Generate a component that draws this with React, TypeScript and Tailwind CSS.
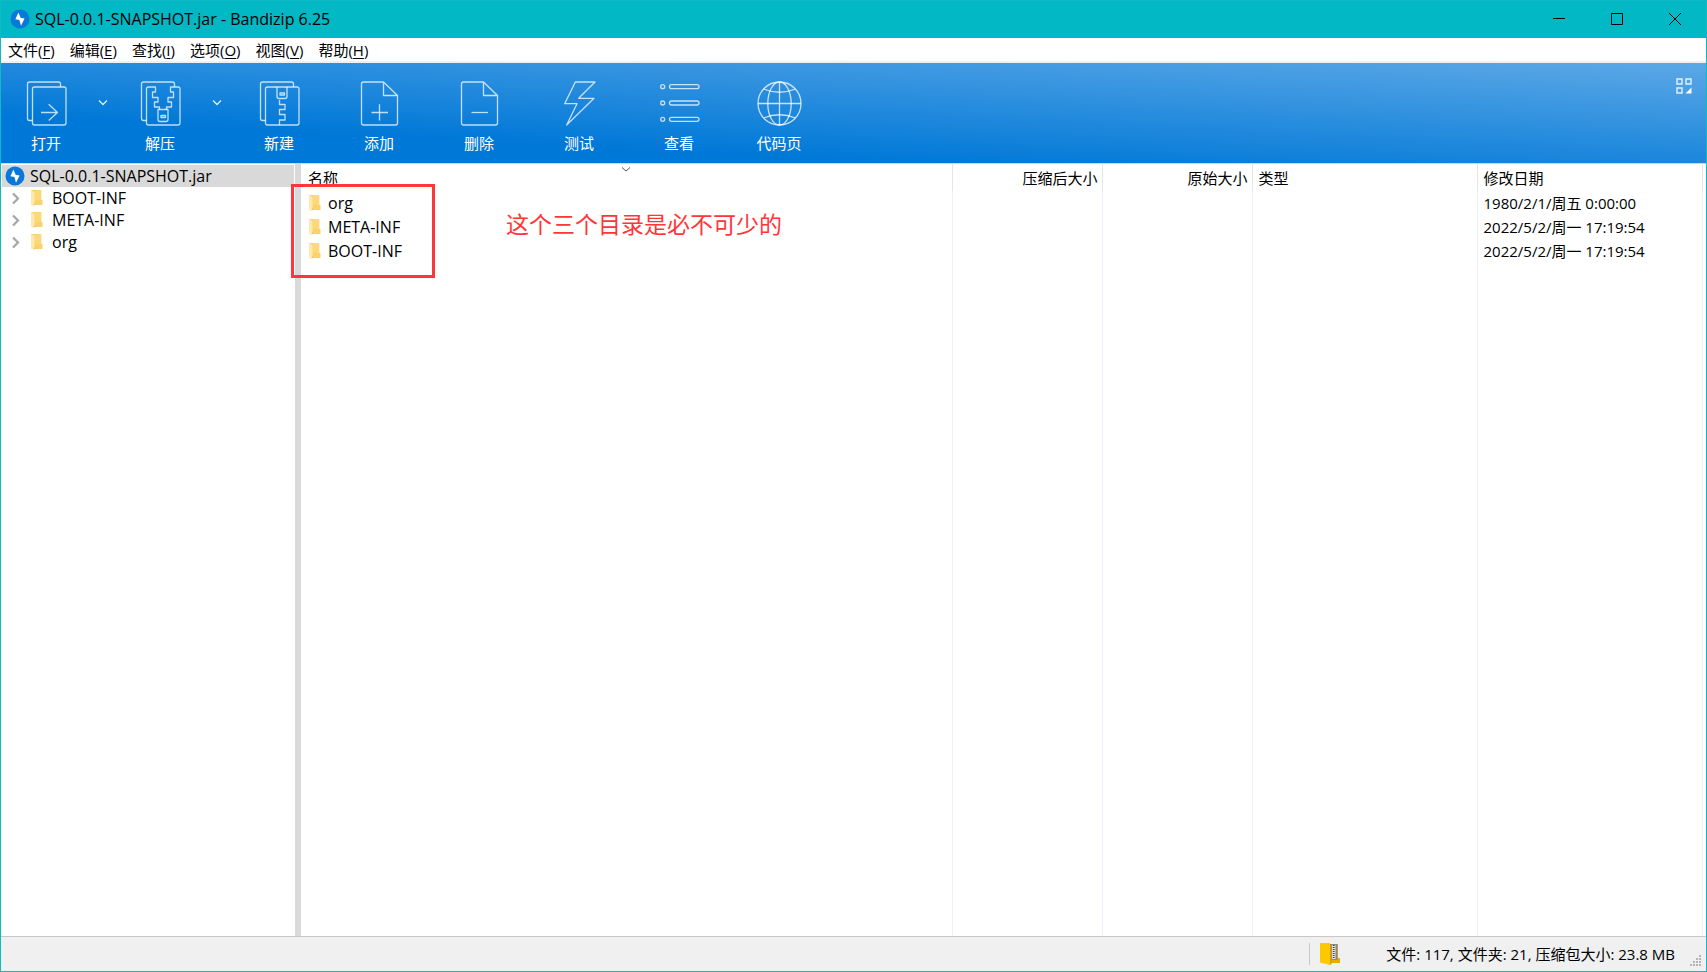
import React, { useState } from 'react';

interface MenuItem {
  label: string;
  hotkey: string;
}

interface ArchiveEntry {
  name: string;
  modified: string;
}

const menuItems: MenuItem[] = [
  { label: '文件', hotkey: 'F' },
  { label: '编辑', hotkey: 'E' },
  { label: '查找', hotkey: 'I' },
  { label: '选项', hotkey: 'O' },
  { label: '视图', hotkey: 'V' },
  { label: '帮助', hotkey: 'H' },
];

const treeFolders = ['BOOT-INF', 'META-INF', 'org'];

const entries: ArchiveEntry[] = [
  { name: 'org', modified: '1980/2/1/周五 0:00:00' },
  { name: 'META-INF', modified: '2022/5/2/周一 17:19:54' },
  { name: 'BOOT-INF', modified: '2022/5/2/周一 17:19:54' },
];

const AppLogo: React.FC<{ className?: string }> = ({ className }) => (
  <svg viewBox="0 0 20 20" className={className} aria-hidden="true">
    <circle cx="10" cy="10" r="9.5" fill="#0a78d8" />
    <path d="M8.4 3.4 L5.4 10.2 L9.4 11 L11 16.8 L14.6 9.6 L10.6 8.8 Z" fill="#fff" />
  </svg>
);

const FolderIcon: React.FC = () => (
  <svg viewBox="0 0 14 18" className="w-[14px] h-[18px] shrink-0" aria-hidden="true">
    <path d="M1 1 H11 V11 H12.5 V16 H4 L1 15 Z" fill="#f7d26f" />
    <path d="M5 1 H11.4 V11 H5 Z" fill="#fbd978" />
    <path d="M1 1 L4.6 3 V13.5 L3.6 17 L1 15.4 Z" fill="#fde9a9" />
    <path d="M4.6 13 L3.6 17 L4.6 16 Z" fill="#e9bd55" />
  </svg>
);

const ToolIcon: React.FC<{ children: React.ReactNode }> = ({ children }) => (
  <svg
    viewBox="0 0 48 48"
    className="w-12 h-12"
    fill="none"
    stroke="#fff"
    strokeOpacity="0.75"
    strokeWidth="1.3"
    strokeLinejoin="round"
    aria-hidden="true"
  >
    {children}
  </svg>
);

// Back sheet shared by the open / extract / new icons
const BackSheet = () => <path d="M10.5 40.5 H7.5 Q5.5 40.5 5.5 38.5 V4 Q5.5 2 7.5 2 H36.5 Q38.5 2 38.5 4 V7" />;

const OpenIcon = () => (
  <ToolIcon>
    <BackSheet />
    <rect x="10.5" y="7" width="33.5" height="38" rx="2" />
    <path d="M19 32.5 H35.5 M26.7 24.3 L35.5 32.5 L26.7 40.5" />
  </ToolIcon>
);

const ExtractIcon = () => (
  <ToolIcon>
    <BackSheet />
    <path d="M23.5 29.5 V27 H18.5 V22 H22 V17.5 H16.5 V12 H19.5 V7 H12.5 Q10.5 7 10.5 9 V43 Q10.5 45 12.5 45 H42 Q44 45 44 43 V9 Q44 7 42 7 H34.5 V12 H37.5 V17.5 H32 V22 H35.5 V27 H30.5 V29.5" />
    <path d="M22 29.5 H32 V39.5 Q32 41.5 30 41.5 H24 Q22 41.5 22 39.5 Z" />
    <rect x="25" y="35.5" width="4.5" height="2" />
  </ToolIcon>
);

const NewIcon = () => (
  <ToolIcon>
    <BackSheet />
    <rect x="10.5" y="7" width="33.5" height="38" rx="2" />
    <path d="M22 7 V16.5 Q22 18.5 24 18.5 H30 Q32 18.5 32 16.5 V7" />
    <rect x="25" y="13" width="4.5" height="2" />
    <path d="M24.5 20 V24.5 H30 V29.5 H24.5 V34.5 H30 V40 H24.5 V45" />
  </ToolIcon>
);

const Sheet = () => (
  <path d="M28.5 2 H8.5 Q6.5 2 6.5 4 V43 Q6.5 45 8.5 45 H40.5 Q42.5 45 42.5 43 V15.5 L28.5 2 V15.5 H42.5" />
);

const AddIcon = () => (
  <ToolIcon>
    <Sheet />
    <path d="M16.5 32.5 H33 M24.5 24.3 V40.5" />
  </ToolIcon>
);

const DeleteIcon = () => (
  <ToolIcon>
    <Sheet />
    <path d="M16.5 32.5 H33" />
  </ToolIcon>
);

const TestIcon = () => (
  <ToolIcon>
    <path d="M20.3 2 H40 L23.7 18.3 H39 L11.7 45 L22 23.7 H9.7 Z" />
  </ToolIcon>
);

const ViewIcon = () => (
  <ToolIcon>
    {[6.7, 23, 39.3].map((y) => (
      <g key={y}>
        <circle cx="7.7" cy={y} r="2" />
        <rect x="14.5" y={y - 2} width="29.5" height="4" rx="2" />
      </g>
    ))}
  </ToolIcon>
);

const CodePageIcon = () => (
  <ToolIcon>
    <circle cx="24.5" cy="23.5" r="21.5" />
    <path d="M24.5 2 V45 M3 23.5 H46" />
    <ellipse cx="24.5" cy="23.5" rx="11.7" ry="21.5" />
    <path d="M8.5 9 Q24.5 15.5 40.5 9 M8.5 38 Q24.5 31.5 40.5 38" />
  </ToolIcon>
);

const tools = [
  { label: '新建', Icon: NewIcon },
  { label: '添加', Icon: AddIcon },
  { label: '删除', Icon: DeleteIcon },
  { label: '测试', Icon: TestIcon },
  { label: '查看', Icon: ViewIcon },
  { label: '代码页', Icon: CodePageIcon },
];

const splitTools = [
  { label: '打开', Icon: OpenIcon },
  { label: '解压', Icon: ExtractIcon },
];

const TitleBar: React.FC = () => (
  <header className="flex h-[37px] shrink-0 items-center bg-[#02b8c5] pb-[2px] pl-[9px] pr-[2px]">
    <AppLogo className="w-5 h-5" />
    <h1 className="ml-[5px] flex-1 text-base leading-5">SQL-0.0.1-SNAPSHOT.jar - Bandizip 6.25</h1>
    <button aria-label="最小化" className="flex h-full w-[58px] items-center justify-center hover:bg-black/10">
      <svg viewBox="0 0 12 12" className="w-3 h-3" stroke="#000"><path d="M0 5.5 H12" /></svg>
    </button>
    <button aria-label="最大化" className="flex h-full w-[58px] items-center justify-center hover:bg-black/10">
      <svg viewBox="0 0 12 12" className="w-3 h-3" stroke="#000" fill="none"><path d="M.5 .5 H11.5 V11.5 H.5 Z" /></svg>
    </button>
    <button aria-label="关闭" className="flex h-full w-[58px] items-center justify-center hover:bg-red-600">
      <svg viewBox="0 0 12 12" className="w-3 h-3" stroke="#000"><path d="M0 0 L12 12 M12 0 L0 12" /></svg>
    </button>
  </header>
);

const MenuBar: React.FC = () => (
  <nav className="flex h-[25px] shrink-0 items-center gap-[15px] border-b-2 border-[#f0f0f0] bg-white pl-[7px]">
    {menuItems.map((item) => (
      <button key={item.hotkey} className="leading-5 hover:bg-sky-100">
        {item.label}(<span className="underline underline-offset-2">{item.hotkey}</span>)
      </button>
    ))}
  </nav>
);

const Toolbar: React.FC = () => (
  <div className="flex h-[101px] shrink-0 border-b border-[#c5dcee] bg-[linear-gradient(3deg,#0078d7_25%,#5ca8e6_100%)] text-white">
    {splitTools.map(({ label, Icon }) => (
      <div key={label} className="flex">
        <button className="flex w-[90px] flex-col items-center pt-[17px]">
          <Icon />
          <span className="mt-[5px] leading-5">{label}</span>
        </button>
        <button aria-label={`${label}选项`} className="flex w-6 justify-center pt-[34px]">
          <svg viewBox="0 0 10 10" className="w-[10px] h-[10px]" fill="none" stroke="#fff" strokeOpacity="0.85" strokeWidth="1.4">
            <path d="M1 3.5 L5 7.5 L9 3.5" />
          </svg>
        </button>
      </div>
    ))}
    {tools.map(({ label, Icon }) => (
      <button key={label} className="flex w-[100px] flex-col items-center pt-[17px]">
        <Icon />
        <span className="mt-[5px] leading-5">{label}</span>
      </button>
    ))}
    <button aria-label="切换布局" className="ml-auto mr-[14px] mt-[15px] h-4 w-4">
      <svg viewBox="0 0 16 16" className="w-4 h-4" fill="none" stroke="#fff" strokeOpacity="0.85" strokeWidth="1.4">
        <path d="M1 1 H6 V6 H1 Z M10 1 H15 V6 H10 Z M1 10 H6 V15 H1 Z" />
        <path d="M15.5 9.5 V15.5 H9.5 Z" fill="#fff" stroke="none" />
      </svg>
    </button>
  </div>
);

const FolderTree: React.FC<{ selected: string; onSelect: (name: string) => void }> = ({ selected, onSelect }) => (
  <aside className="w-[294px] shrink-0 bg-white pl-px pt-px pr-px text-base">
    <button
      onClick={() => onSelect('root')}
      className={`flex h-[22px] w-full items-center pl-[3px] text-left ${selected === 'root' ? 'bg-[#d9d9d9]' : ''}`}
    >
      <AppLogo className="w-5 h-5" />
      <span className="ml-[5px] leading-5">SQL-0.0.1-SNAPSHOT.jar</span>
    </button>
    {treeFolders.map((name) => (
      <button
        key={name}
        onClick={() => onSelect(name)}
        className={`flex h-[22px] w-full items-center pl-[10px] text-left ${selected === name ? 'bg-[#d9d9d9]' : ''}`}
      >
        <svg viewBox="0 0 8 12" className="w-2 h-3" fill="none" stroke="#a6a6a6" strokeWidth="2.2">
          <path d="M1 1.5 L6 6.5 L1 11.5" />
        </svg>
        <span className="ml-[10px]"><FolderIcon /></span>
        <span className="ml-2 leading-5">{name}</span>
      </button>
    ))}
  </aside>
);

const FileTable: React.FC = () => (
  <table className="h-full w-full table-fixed border-collapse text-left">
    <colgroup>
      <col />
      <col className="w-[150px]" />
      <col className="w-[150px]" />
      <col className="w-[225px]" />
      <col className="w-[225px]" />
      <col className="w-[4px]" />
    </colgroup>
    <thead>
      <tr className="h-[27px] [&>th]:border-r [&>th]:border-[#e5e5e5] [&>th]:p-0 [&>th]:font-normal [&>th]:leading-5">
        <th className="relative">
          <span className="pl-[7px]">名称</span>
          <svg viewBox="0 0 10 5" className="absolute left-1/2 top-[3px] h-[5px] w-[10px] -translate-x-1/2" fill="none" stroke="#555">
            <path d="M1 .5 L5 4 L9 .5" />
          </svg>
        </th>
        <th className="text-right"><span className="pr-1">压缩后大小</span></th>
        <th className="text-right"><span className="pr-1">原始大小</span></th>
        <th><span className="pl-[6px]">类型</span></th>
        <th><span className="pl-[6px]">修改日期</span></th>
        <td />
      </tr>
    </thead>
    <tbody className="[&_td]:border-r [&_td]:border-[#e8f1fc] [&_td]:p-0 [&_td:last-child]:border-r-0">
      {entries.map((entry) => (
        <tr key={entry.name} className="h-6">
          <td>
            <div className="flex items-center pl-[7px]">
              <FolderIcon />
              <span className="ml-[6px] text-base leading-5">{entry.name}</span>
            </div>
          </td>
          <td />
          <td />
          <td />
          <td className="leading-5"><span className="pl-[6px]">{entry.modified}</span></td>
          <td />
        </tr>
      ))}
      {/* empty row keeps the column lines running down the pane */}
      <tr>
        <td /><td /><td /><td /><td /><td />
      </tr>
    </tbody>
  </table>
);

const StatusBar: React.FC = () => (
  <footer className="flex h-[35px] shrink-0 items-center justify-end border-t border-[#c8c8c8] bg-[#f0f0f0]">
    <div className="flex h-[22px] items-center border-l border-[#c8c8c8] pl-[10px]">
      <svg viewBox="0 0 20 22" className="h-[22px] w-5" aria-hidden="true">
        <path d="M8 1 H18 V15 H20 V20 H8 Z" fill="#e8ac00" />
        <path d="M10 1 H17.5 V17 H10 Z" fill="#8a8a8a" />
        <path d="M12 2 H15.5 V16 H12 Z" fill="#e2e2e2" />
        <path d="M13.7 2 V16" stroke="#444" strokeWidth="1.8" strokeDasharray="1 1" />
        <path d="M0 0 H10 V22 L0 19.5 Z" fill="#fcc800" />
        <path d="M10 2 V22 L11.5 21 V2 Z" fill="#dda000" />
      </svg>
      <span className="ml-[46px] leading-5">文件: 117, 文件夹: 21, 压缩包大小: 23.8 MB</span>
    </div>
    <svg viewBox="0 0 12 12" className="ml-[15px] mr-1 h-3 w-3 self-end mb-1" fill="#b4b4b4" aria-hidden="true">
      <path d="M9 0h2v2h-2z M6 3h2v2h-2z M9 3h2v2h-2z M3 6h2v2h-2z M6 6h2v2h-2z M9 6h2v2h-2z M0 9h2v2h-2z M3 9h2v2h-2z M6 9h2v2h-2z M9 9h2v2h-2z" />
    </svg>
  </footer>
);

const App: React.FC = () => {
  const [selected, setSelected] = useState('root');

  return (
    <div className="flex h-screen flex-col overflow-hidden border border-[#10b9c4] bg-white font-['Open_Sans','Noto_Sans_CJK_SC',sans-serif] text-[15px] text-black">
      <TitleBar />
      <MenuBar />
      <Toolbar />
      <div className="flex min-h-0 flex-1">
        <FolderTree selected={selected} onSelect={setSelected} />
        <div className="w-[6px] shrink-0 bg-[#d9d9d9]" />
        <main className="relative min-w-0 flex-1">
          <FileTable />
          {/* red callout over the three folders */}
          <div className="pointer-events-none absolute -left-[10px] top-5 h-[94px] w-[144px] border-[3px] border-[#ff3639]" />
          <p className="pointer-events-none absolute left-[205px] top-[44px] text-[23px] leading-8 text-[#ff3639]">
            这个三个目录是必不可少的
          </p>
        </main>
      </div>
      <StatusBar />
    </div>
  );
};

export default App;
